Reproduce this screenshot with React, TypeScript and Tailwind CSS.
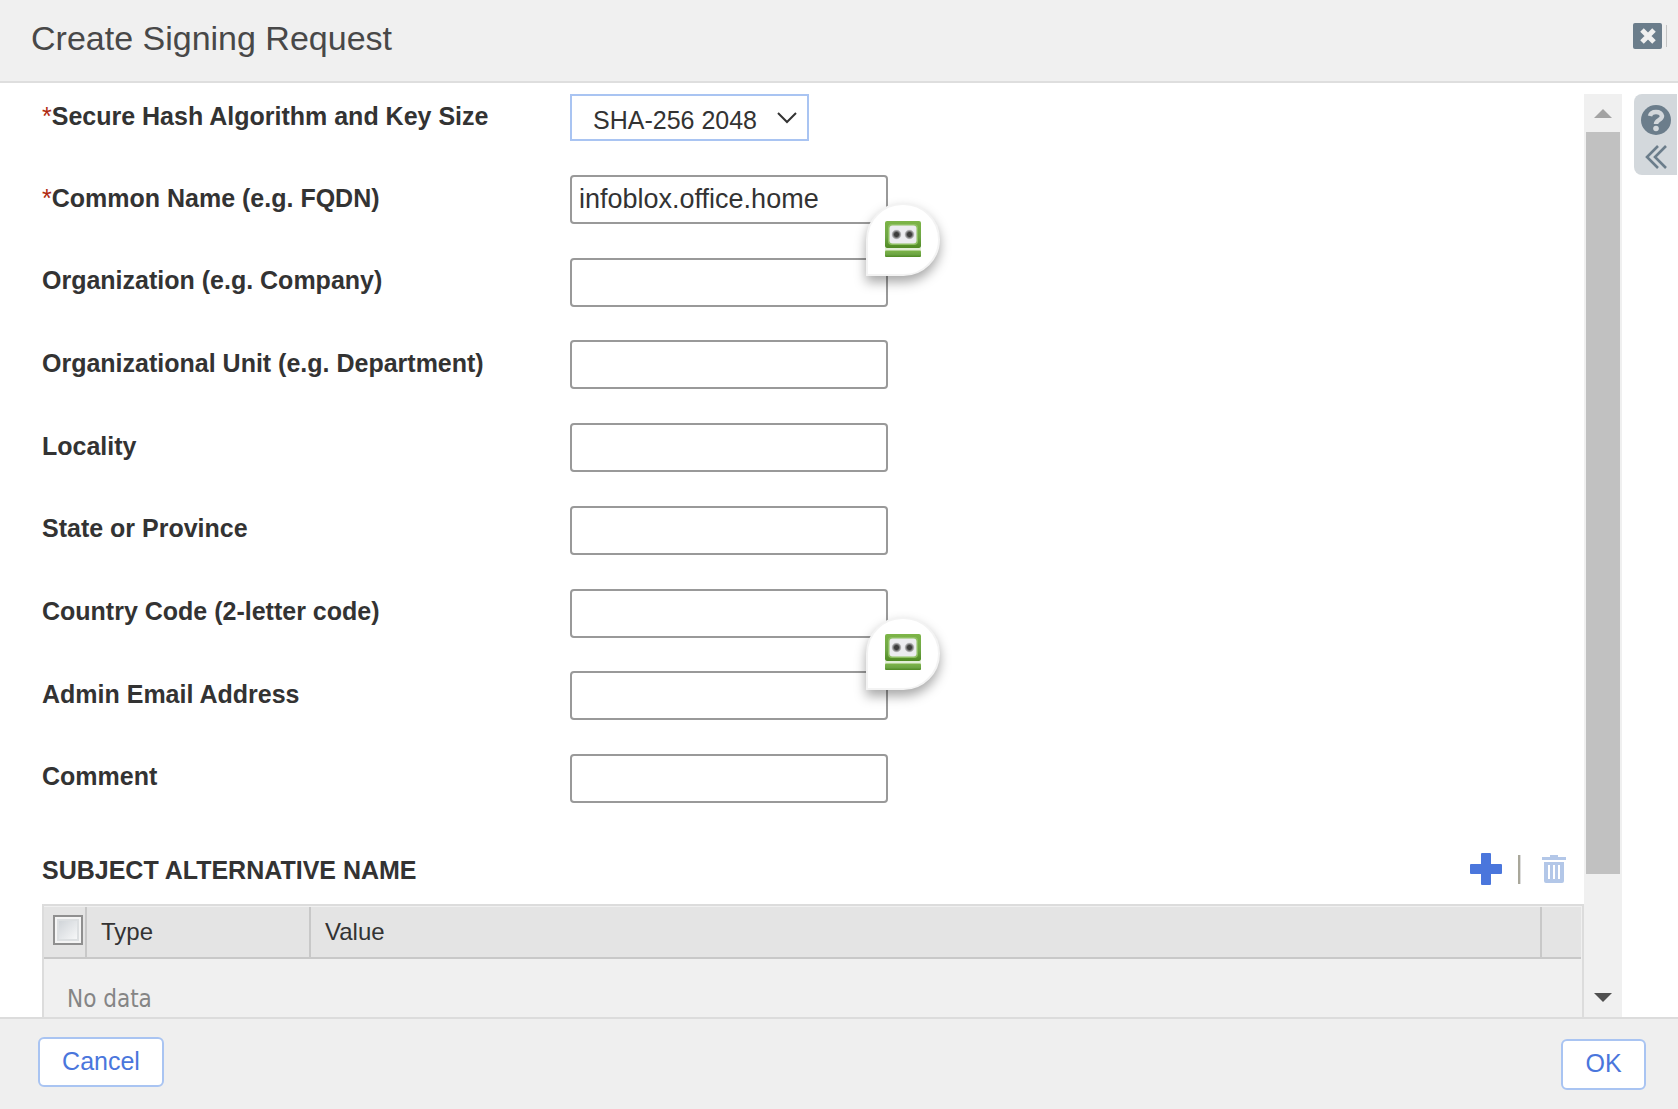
import { useState } from 'react'

type Field = { id: string; label: string; required?: boolean; filler?: boolean; value?: string }

const FIELDS: Field[] = [
  { id: 'cn', label: 'Common Name (e.g. FQDN)', required: true, filler: true, value: 'infoblox.office.home' },
  { id: 'org', label: 'Organization (e.g. Company)' },
  { id: 'unit', label: 'Organizational Unit (e.g. Department)' },
  { id: 'locality', label: 'Locality' },
  { id: 'state', label: 'State or Province' },
  { id: 'country', label: 'Country Code (2-letter code)', filler: true },
  { id: 'email', label: 'Admin Email Address' },
  { id: 'comment', label: 'Comment' },
]

function FieldLabel({ id, label, required }: { id: string; label: string; required?: boolean }) {
  return (
    <label htmlFor={id} className="w-[528px] shrink-0 pb-1 text-[25px] leading-8 font-bold">
      {required && <span className="font-normal text-[#b02a10]">*</span>}
      {label}
    </label>
  )
}

function FillerButton() {
  return (
    <button
      aria-label="Fill form"
      className="absolute top-7 -right-[52px] z-10 flex h-[73px] w-[74px] items-center justify-center rounded-full rounded-bl-none border-2 border-[#f3f3f3] bg-white pb-0.5 shadow-[0_6px_12px_rgba(0,0,0,0.35)]"
    >
      <svg width="36" height="36" viewBox="0 0 36 36">
        <defs>
          <linearGradient id="head" x1="0" y1="0" x2="0" y2="1">
            <stop offset="0" stopColor="#7db548" />
            <stop offset="0.6" stopColor="#6da544" />
            <stop offset="1" stopColor="#4f8a22" />
          </linearGradient>
          <radialGradient id="eye">
            <stop offset="0.4" stopColor="#3c3c3c" />
            <stop offset="1" stopColor="#3c3c3c" stopOpacity="0.1" />
          </radialGradient>
        </defs>
        <rect width="36" height="27" rx="2" fill="url(#head)" />
        <rect x="3" y="3" width="30" height="21" rx="4" fill="#8fc063" />
        <rect x="4.5" y="4.500" width="27" height="18" rx="3" fill="#ececf0" />
        <circle cx="11.500" cy="13.500" r="5" fill="url(#eye)" />
        <circle cx="24.500" cy="13.500" r="5" fill="url(#eye)" />
        <rect y="27" width="36" height="3" fill="#e2eed6" />
        <rect y="29.500" width="36" height="6.500" rx="1" fill="url(#head)" />
      </svg>
    </button>
  )
}

function Scrollbar() {
  return (
    <div className="flex w-[38px] shrink-0 flex-col bg-[#f0f0f0]">
      <div className="flex h-[38px] items-center justify-center">
        <svg width="18" height="9" viewBox="0 0 18 9"><path d="M0 9 9 0l9 9z" fill="#a3a3a3" /></svg>
      </div>
      <div className="mx-0.5 grow-[742] bg-[#c1c1c1]" />
      <div className="grow-[105]" />
      <div className="flex h-[38px] items-center justify-center pb-0.5">
        <svg width="18" height="9" viewBox="0 0 18 9"><path d="M0 0 9 9l9-9z" fill="#505050" /></svg>
      </div>
    </div>
  )
}

export default function App() {
  const [values, setValues] = useState<Record<string, string>>(
    Object.fromEntries(FIELDS.map((f) => [f.id, f.value ?? ''])),
  )

  return (
    <div className="flex h-screen flex-col bg-white font-['Liberation_Sans',Arial,sans-serif] text-[#333]">
      <header className="flex h-[83px] shrink-0 items-start justify-between border-b-2 border-[#dedede] bg-[#f0f0f0] pr-[11px] pl-[31px]">
        <h1 className="pt-[18px] text-[34px] leading-10 text-[#484848]">Create Signing Request</h1>
        <div className="flex items-center gap-1 pt-[23px]">
          <button aria-label="Close" className="flex h-[26px] w-[29px] items-center justify-center rounded-xs bg-[#6b7d8b]">
            <svg width="16" height="16" viewBox="0 0 16 16" stroke="#f0f0f0" strokeWidth="5">
              <path d="M2 2l12 12M14 2L2 14" />
            </svg>
          </button>
          <div className="h-[22px] w-px bg-[#c4c4c4]" />
        </div>
      </header>

      <div className="flex min-h-0 flex-1 pt-[11px]">
        <main className="flex min-w-0 flex-1 flex-col overflow-hidden pl-[42px]">
          <div className="flex h-[47px] shrink-0 items-center">
            <FieldLabel id="algorithm" label="Secure Hash Algorithm and Key Size" required />
            <div className="relative">
              <select
                id="algorithm"
                className="h-[47px] w-[239px] appearance-none border-2 border-[#a9c4f2] bg-white pt-1.5 pl-[21px] text-[25px]"
              >
                <option>SHA-256 2048</option>
              </select>
              <svg
                className="pointer-events-none absolute top-[18px] right-3"
                width="20" height="12" viewBox="0 0 20 12" fill="none" stroke="#333" strokeWidth="2"
              >
                <path d="M1 1l9 9 9-9" />
              </svg>
            </div>
          </div>

          <div className="mt-[34px] flex h-[628px] shrink-0 flex-col justify-between">
            {FIELDS.map((f) => (
              <div key={f.id} className="flex items-center">
                <FieldLabel id={f.id} label={f.label} required={f.required} />
                <div className="relative">
                  <input
                    id={f.id}
                    type="text"
                    value={values[f.id]}
                    onChange={(e) => setValues({ ...values, [f.id]: e.target.value })}
                    className="block h-[49px] w-[318px] rounded-sm border-2 border-[#999] bg-white px-[7px] text-[27px]"
                  />
                  {f.filler && <FillerButton />}
                </div>
              </div>
            ))}
          </div>

          <div className="mt-[50px] flex h-8 shrink-0 items-center justify-between pr-[18px]">
            <h2 className="pt-0.5 text-[25px] leading-8 font-bold">SUBJECT ALTERNATIVE NAME</h2>
            <div className="flex items-center">
              <button aria-label="Add">
                <svg width="32" height="32" viewBox="0 0 32 32" fill="#4a76dc">
                  <rect x="11" width="10" height="32" rx="1" />
                  <rect y="11" width="32" height="10" rx="1" />
                </svg>
              </button>
              <div className="ml-4 h-[29px] w-[3px] border-r border-[#ddd] bg-[#a9a79a]" />
              <button aria-label="Delete" className="ml-[21px]">
                <svg width="24" height="28" viewBox="0 0 24 28" fill="#b3c7e8">
                  <path d="M8 0h8v2h8v3H0V2h8z" />
                  <path fillRule="evenodd" d="M2 7h20v19q0 2-2 2H4q-2 0-2-2zM6 10v14h2V10zM11 10v14h2V10zM16 10v14h2V10z" />
                </svg>
              </button>
            </div>
          </div>

          <div className="mt-[19px] shrink-0 border-2 border-[#dcdcdc] bg-[#f0f0f0] pt-px pr-px">
            <table className="w-full table-fixed border-collapse text-left text-[24px]">
              <thead>
                <tr className="h-[51px] border-b-2 border-[#c8c8c8] bg-[#e4e4e4]">
                  <th className="w-[42px] border-r-2 border-[#c8c8c8] pb-1 pl-[9px]">
                    <input
                      type="checkbox"
                      aria-label="Select all"
                      className="block size-[30px] appearance-none border-2 border-[#8f8f8f] bg-linear-to-br from-[#c8cdd2] to-white shadow-[inset_0_0_0_2px_#f4f4f4,inset_0_0_0_4px_#dcdfe1]"
                    />
                  </th>
                  <th className="w-[224px] border-r-2 border-[#c8c8c8] pl-[14px] font-normal">Type</th>
                  <th className="border-r-2 border-[#c8c8c8] pl-[14px] font-normal">Value</th>
                  <th className="w-10" />
                </tr>
              </thead>
              <tbody>
                <tr className="h-20">
                  <td colSpan={4} className="pl-[23px] font-['DejaVu_Sans_Condensed','DejaVu_Sans',sans-serif] text-[#858585]">
                    No data
                  </td>
                </tr>
              </tbody>
            </table>
          </div>
        </main>

        <Scrollbar />

        <aside className="mr-px ml-3 flex h-[81px] w-[43px] shrink-0 flex-col items-center gap-2.5 rounded-l-lg bg-[#d3d8dc] pt-[11px]">
          <button aria-label="Help">
            <svg width="30" height="30" viewBox="0 0 30 30">
              <circle cx="15" cy="15" r="15" fill="#6b7d8b" />
              <path d="M9 11q1-4 6-4t6 4q0 2-3 4t-3 4" fill="none" stroke="#d3d8dc" strokeWidth="4.500" />
              <circle cx="15" cy="23.500" r="2.800" fill="#d3d8dc" />
            </svg>
          </button>
          <button aria-label="Collapse panel">
            <svg width="22" height="24" viewBox="0 0 22 24" fill="none" stroke="#6b7d8b" strokeWidth="2.600">
              <path d="M13 1L2 12l11 11M21 1L10 12l11 11" />
            </svg>
          </button>
        </aside>
      </div>

      <footer className="flex h-[92px] shrink-0 items-start justify-between border-t-2 border-[#dcdcdc] bg-[#efefef] pt-[18px] pr-8 pl-[38px] text-[#4a76dc]">
        <button className="h-[50px] w-[126px] rounded-md border-2 border-[#a9c4f2] bg-white text-[25px]">Cancel</button>
        <button className="mt-0.5 h-[51px] w-[85px] rounded-md border-2 border-[#a9c4f2] bg-white pb-0.5 text-[25px]">OK</button>
      </footer>
    </div>
  )
}
